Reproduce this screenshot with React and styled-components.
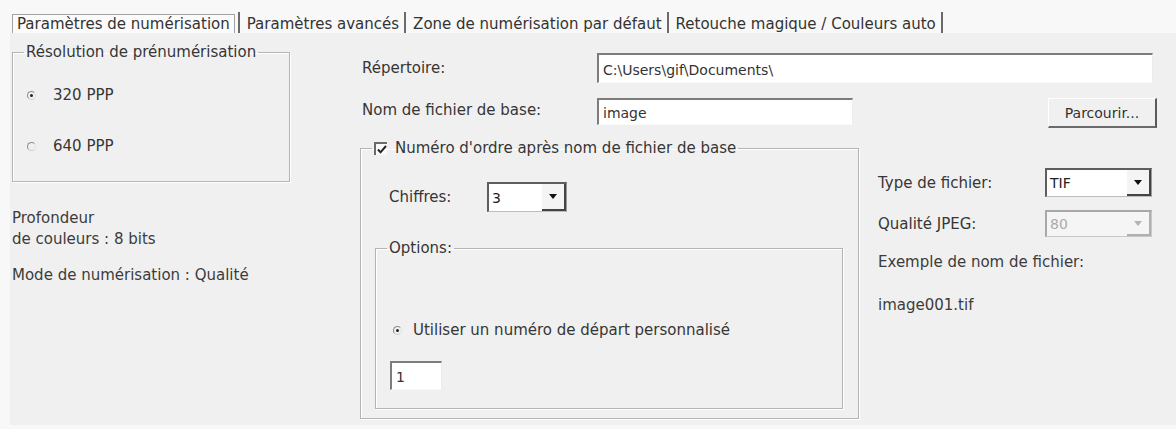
import React from 'react'
import styled, { createGlobalStyle } from 'styled-components'

const GlobalStyle = createGlobalStyle`
  html, body {
    margin: 0;
    padding: 0;
    background: #f8f8f8;
  }
  body {
    font-family: "DejaVu Sans", Verdana, sans-serif;
    font-size: 15px;
    color: #363636;
  }
`

const Window = styled.div`
  width: 1176px;
  height: 429px;
  box-sizing: border-box;
  padding: 12px 0 0 10px;
  display: flex;
  flex-direction: column;
`

const TabBar = styled.div`
  display: flex;
  height: 21px;
  padding-left: 2px;
`

const Tab = styled.div`
  display: flex;
  align-items: center;
  padding: ${({ $active }) => ($active ? '0 3px 0 0' : '0 5px 0 7px')};
  border-right: 2px solid #6a6a6a;
  height: 24px;
  white-space: nowrap;
`

const TabLabel = styled.span`
  line-height: 18px;
  padding: ${({ $active }) => ($active ? '0 4px' : '0')};
  color: #333;
  border: ${({ $active }) => ($active ? '1px solid #a2a2a2' : 'none')};
  background: ${({ $active }) => ($active ? '#fbfbfb' : 'transparent')};
`

const Panel = styled.div`
  display: flex;
  height: 392px;
  box-sizing: border-box;
  padding: 10px 0 0 2px;
  background: #f0f0f0;
`

const LeftColumn = styled.div`
  width: 278px;
  display: flex;
  flex-direction: column;
`

const GroupBox = styled.fieldset`
  margin: ${({ $margin }) => $margin || '0'};
  padding: 0;
  min-width: 0;
  box-sizing: border-box;
  width: ${({ $width }) => $width}px;
  height: ${({ $height }) => $height}px;
  border: 1px solid #b4b4b4;
  box-shadow: 1px 1px 0 #ffffff, inset 1px 1px 0 #ffffff;
  display: flex;
  flex-direction: column;
`

const GroupTitle = styled.legend`
  margin-left: 11px;
  padding: 0 2px;
  line-height: 18px;
  display: flex;
  align-items: center;
  gap: 8px;
  white-space: nowrap;
`

const RadioRow = styled.div`
  display: flex;
  align-items: center;
  height: 22px;
  gap: ${({ $gap }) => $gap || 17}px;
  margin-top: ${({ $top }) => $top}px;
  padding-left: ${({ $left }) => $left}px;
`

const Radio = styled.span`
  position: relative;
  width: 7px;
  height: 7px;
  border-radius: 50%;
  border: 1px solid #8c8c8c;
  border-right-color: #e2e2e2;
  border-bottom-color: #d0d0d0;
  &::after {
    content: '';
    display: ${({ $checked }) => ($checked ? 'block' : 'none')};
    position: absolute;
    left: 2px;
    top: 2px;
    width: 3px;
    height: 3px;
    border-radius: 50%;
    background: #222;
  }
`

const InfoText = styled.div`
  line-height: 21px;
  margin-top: ${({ $top }) => $top}px;
  color: #3c3c3c;
`

const RightArea = styled.div`
  margin-left: 66px;
  width: 801px;
  padding-top: 10px;
  display: flex;
  flex-direction: column;
`

const FieldRow = styled.div`
  display: flex;
  align-items: ${({ $align }) => $align || 'center'};
  margin-top: ${({ $top }) => $top || 0}px;
`

const FieldLabel = styled.div`
  width: ${({ $width }) => $width}px;
  padding-left: ${({ $left }) => $left || 0}px;
  line-height: ${({ $lh }) => ($lh ? `${$lh}px` : 'normal')};
  box-sizing: border-box;
  flex-shrink: 0;
  white-space: nowrap;
`

const TextInput = styled.input`
  box-sizing: border-box;
  width: ${({ $width }) => $width}px;
  height: ${({ $height }) => $height}px;
  margin: ${({ $margin }) => $margin || '0'};
  padding: 2px 4px 0;
  font: inherit;
  font-size: 14px;
  color: #333;
  background: #ffffff;
  border: none;
  border-top: 2px solid #7c7c7c;
  border-left: 2px solid #7c7c7c;
  border-right: 1px solid #ececec;
  border-bottom: 1px solid #fafafa;
  outline: none;
`

const PushButton = styled.button`
  margin-left: auto;
  width: 109px;
  height: 30px;
  font: inherit;
  font-size: 14px;
  color: #333;
  background: #f0f0f0;
  border: none;
  border-top: 1px solid #ffffff;
  border-left: 1px solid #ffffff;
  border-right: 2px solid #5a5a5a;
  border-bottom: 2px solid #6a6a6a;
  padding: 0;
`

const Dropdown = styled.div`
  box-sizing: border-box;
  width: ${({ $width }) => $width}px;
  height: ${({ $height }) => $height}px;
  display: flex;
  align-items: stretch;
  background: ${({ $disabled }) => ($disabled ? '#f5f5f5' : '#ffffff')};
  border-top: 2px solid ${({ $disabled }) => ($disabled ? '#a8a8a8' : '#5e5e5e')};
  border-left: 2px solid ${({ $disabled }) => ($disabled ? '#a8a8a8' : '#5e5e5e')};
  border-right: 1px solid ${({ $disabled }) => ($disabled ? '#c8c8c8' : '#9a9a9a')};
  border-bottom: 1px solid ${({ $disabled }) => ($disabled ? '#c8c8c8' : '#bdbdbd')};
`

const DropValue = styled.span`
  flex: 1;
  display: flex;
  align-items: center;
  padding-left: 3px;
  font-size: 14px;
  color: ${({ $disabled }) => ($disabled ? '#aaaaaa' : '#222')};
`

const DropArrow = styled.span`
  width: 22px;
  display: flex;
  align-items: center;
  justify-content: center;
  border-right: 2px solid ${({ $disabled }) => ($disabled ? '#b0b0b0' : '#444')};
  border-bottom: 2px solid ${({ $disabled }) => ($disabled ? '#b0b0b0' : '#444')};
  background: ${({ $disabled }) => ($disabled ? '#f5f5f5' : '#f4f4f4')};
`

const CheckBox = styled.span`
  width: 13px;
  height: 13px;
  box-sizing: border-box;
  border-top: 2px solid #6a6a6a;
  border-left: 2px solid #6a6a6a;
  background: #fafafa;
  display: flex;
  align-items: center;
  justify-content: center;
`

const NumberingBody = styled.div`
  display: flex;
  flex-direction: column;
`

const FileColumn = styled.div`
  margin-left: 19px;
  width: 277px;
  padding-top: 29px;
  display: flex;
  flex-direction: column;
`

const Note = styled.div`
  line-height: 20px;
  margin-top: ${({ $top }) => $top}px;
  color: #3c3c3c;
`

const Arrow = ({ disabled }) => (
  <svg width="8" height="5" viewBox="0 0 8 5">
    <path d="M0 0h8L4 5z" fill={disabled ? '#b4b4b4' : '#111'} />
  </svg>
)

const Select = ({ width, height, value, disabled }) => (
  <Dropdown $width={width} $height={height} $disabled={disabled}>
    <DropValue $disabled={disabled}>{value}</DropValue>
    <DropArrow $disabled={disabled}>
      <Arrow disabled={disabled} />
    </DropArrow>
  </Dropdown>
)

const tabs = [
  'Paramètres de numérisation',
  'Paramètres avancés',
  'Zone de numérisation par défaut',
  'Retouche magique / Couleurs auto',
]

export default function App() {
  return (
    <Window>
      <GlobalStyle />
      <TabBar>
        {tabs.map((t, i) => (
          <Tab key={t} $active={i === 0}>
            <TabLabel $active={i === 0}>{t}</TabLabel>
          </Tab>
        ))}
      </TabBar>

      <Panel>
        <LeftColumn>
          <GroupBox $width={278} $height={139}>
            <GroupTitle>Résolution de prénumérisation</GroupTitle>
            <RadioRow $top={23} $left={14}>
              <Radio $checked />
              <span>320 PPP</span>
            </RadioRow>
            <RadioRow $top={29} $left={14}>
              <Radio />
              <span>640 PPP</span>
            </RadioRow>
          </GroupBox>
          <InfoText $top={26}>
            Profondeur
            <br />
            de couleurs : 8 bits
          </InfoText>
          <InfoText $top={15}>Mode de numérisation : Qualité</InfoText>
        </LeftColumn>

        <RightArea>
          <FieldRow>
            <FieldLabel $width={241} $left={6}>Répertoire:</FieldLabel>
            <TextInput $width={556} $height={30} value="C:\Users\gif\Documents\" readOnly />
          </FieldRow>

          <FieldRow $top={15} $align="flex-start">
            <FieldLabel $width={241} $left={6} $lh={24}>
              Nom de fichier de base:
            </FieldLabel>
            <TextInput $width={256} $height={27} value="image" readOnly />
            <PushButton>Parcourir...</PushButton>
          </FieldRow>

          <FieldRow $top={11} $align="flex-start">
            <GroupBox $width={499} $height={280} $margin="0 0 0 4px">
              <GroupTitle>
                <CheckBox>
                  <svg width="10" height="9" viewBox="0 0 10 9">
                    <path d="M1 4.5l2.5 2.8L9 1" fill="none" stroke="#222" strokeWidth="2" />
                  </svg>
                </CheckBox>
                Numéro d'ordre après nom de fichier de base
              </GroupTitle>
              <NumberingBody>
                <FieldRow $top={25}>
                  <FieldLabel $width={126} $left={28}>Chiffres:</FieldLabel>
                  <Select width={80} height={30} value="3" />
                </FieldRow>
                <GroupBox $width={468} $height={170} $margin="27px 0 0 14px">
                  <GroupTitle>Options:</GroupTitle>
                  <RadioRow $top={62} $left={17} $gap={11}>
                    <Radio $checked />
                    <span>Utiliser un numéro de départ personnalisé</span>
                  </RadioRow>
                  <TextInput $width={52} $height={29} $margin="20px 0 0 14px" value="1" readOnly />
                </GroupBox>
              </NumberingBody>
            </GroupBox>

            <FileColumn>
              <FieldRow>
                <FieldLabel $width={167}>Type de fichier:</FieldLabel>
                <Select width={107} height={29} value="TIF" />
              </FieldRow>
              <FieldRow $top={13}>
                <FieldLabel $width={167}>Qualité JPEG:</FieldLabel>
                <Select width={107} height={27} value="80" disabled />
              </FieldRow>
              <Note $top={15}>Exemple de nom de fichier:</Note>
              <Note $top={23}>image001.tif</Note>
            </FileColumn>
          </FieldRow>
        </RightArea>
      </Panel>
    </Window>
  )
}
